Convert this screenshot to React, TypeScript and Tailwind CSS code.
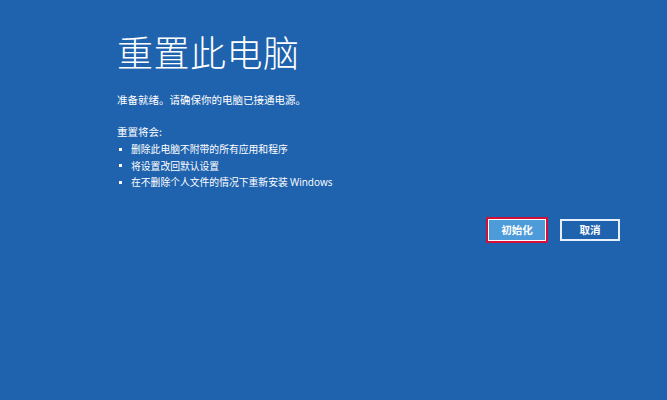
import React from "react";

export default function App() {
  const font = { fontFamily: '"Noto Sans CJK SC", "Noto Sans", sans-serif' };
  return (
    <div
      className="w-[667px] h-[400px] bg-[#1f63ae] text-white overflow-hidden"
      style={font}
    >
      <div className="pl-[117px] pt-[29px] pr-[47px]">
        <h1 className="text-[36px] leading-[44px] font-light tracking-[0.5px]">重置此电脑</h1>
        <p className="mt-[19px] text-[10.5px] leading-[16px]">准备就绪。请确保你的电脑已接通电源。</p>
        <p className="mt-[16px] text-[10.5px] leading-[16px]">重置将会:</p>
        <ul className="mt-[1px] text-[9.8px] leading-[16.5px]">
          <li className="flex items-center">
            <span className="w-[3px] h-[3px] bg-white ml-[2px] mr-[9px]" />
            删除此电脑不附带的所有应用和程序
          </li>
          <li className="flex items-center">
            <span className="w-[3px] h-[3px] bg-white ml-[2px] mr-[9px]" />
            将设置改回默认设置
          </li>
          <li className="flex items-center">
            <span className="w-[3px] h-[3px] bg-white ml-[2px] mr-[9px]" />
            在不删除个人文件的情况下重新安装&nbsp;<span className="text-[10px]" style={{ fontFamily: '"Open Sans", sans-serif' }}>Windows</span>
          </li>
        </ul>
        <div className="mt-[26px] flex justify-end items-center gap-[12px]">
          <div className="border-2 border-[#d0103a]">
            <button className="w-[58px] h-[22px] border border-white bg-[#4e9bd9] text-[10.5px] font-bold text-white flex items-center justify-center">
              初始化
            </button>
          </div>
          <button className="w-[60px] h-[22px] border-2 border-[#e6f0fa] bg-[#1f63ae] text-[10.5px] font-bold text-white flex items-center justify-center">
            取消
          </button>
        </div>
      </div>
    </div>
  );
}
